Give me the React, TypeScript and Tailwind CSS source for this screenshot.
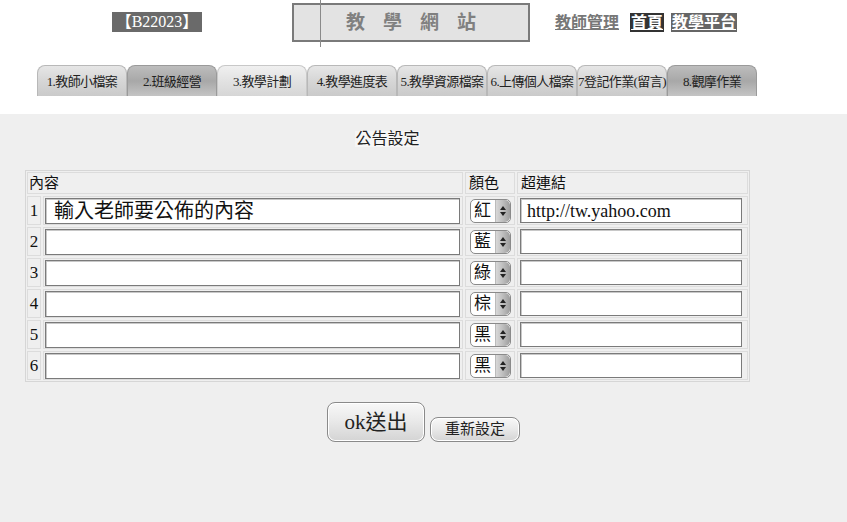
import React from "react";

const tabs = [
  { t: "1.教師小檔案", dark: false, light: false },
  { t: "2.班級經營", dark: true, light: false },
  { t: "3.教學計劃", dark: false, light: true },
  { t: "4.教學進度表", dark: false, light: false },
  { t: "5.教學資源檔案", dark: false, light: false },
  { t: "6.上傳個人檔案", dark: false, light: false },
  { t: "7登記作業(留言)", dark: false, light: false },
  { t: "8.觀摩作業", dark: true, light: false },
];

const rows = [
  { n: "1", text: "輸入老師要公佈的內容", color: "紅", link: "http://tw.yahoo.com" },
  { n: "2", text: "", color: "藍", link: "" },
  { n: "3", text: "", color: "綠", link: "" },
  { n: "4", text: "", color: "棕", link: "" },
  { n: "5", text: "", color: "黑", link: "" },
  { n: "6", text: "", color: "黑", link: "" },
];

function Stepper() {
  return (
    <div className="flex h-full w-[15px] flex-col items-center justify-center gap-[2px] rounded-r-[5px] border-l border-[#bbb] bg-gradient-to-r from-[#d8d8d8] via-[#bdbdbd] to-[#9d9d9d]">
      <svg width="6" height="4" viewBox="0 0 6 4"><path d="M3 0 L6 4 L0 4 Z" fill="#222" /></svg>
      <svg width="6" height="4" viewBox="0 0 6 4"><path d="M0 0 L6 0 L3 4 Z" fill="#222" /></svg>
    </div>
  );
}

export default function App() {
  return (
    <div className="min-h-screen bg-[#efefef] font-['Liberation_Serif','Noto_Sans_CJK_TC',serif] text-[#111]">
      <header className="relative h-[114px] bg-white">
        <div className="absolute left-[320px] top-0 h-[47px] w-px bg-[#8a8a8a]" />
        <div className="flex h-[42px] items-start">
          <div className="ml-[112px] mt-[12px] flex h-[20px] w-[90px] items-center justify-center bg-[#6a6a6a] text-[16px] leading-none text-white">
            【B22023】
          </div>
          <div className="ml-[90px] mt-[3px] flex h-[39px] w-[238px] items-center justify-center border-2 border-[#7a7a7a] bg-[#e3e3e3] pl-[18px] text-[19px] font-bold leading-none tracking-[18px] text-[#808080]">
            教學網站
          </div>
          <div className="ml-[25px] mt-[13px] flex items-center text-[16px] font-bold leading-[19px]">
            <span className="text-[#777] underline">教師管理</span>
            <span className="ml-[11px] bg-[#333] px-[1px] text-white underline">首頁</span>
            <span className="ml-[7px] bg-[#666] px-[1px] text-white underline">教學平台</span>
          </div>
        </div>
        <div className="ml-[37px] mt-[23px] flex">
          {tabs.map((tab) => (
            <div
              key={tab.t}
              className={
                "flex h-[31px] w-[90px] items-center justify-center whitespace-nowrap rounded-t-[8px] border border-b-0 text-[13px] leading-none tracking-[-0.6px] text-[#222] " +
                (tab.dark
                  ? "border-[#9a9a9a] bg-gradient-to-b from-[#bdbdbd] via-[#a8a8a8] to-[#c4c4c4]"
                  : tab.light
                  ? "border-[#c8c8c8] bg-gradient-to-b from-[#f0f0f0] via-[#e2e2e2] to-[#d6d6d6]"
                  : "border-[#b8b8b8] bg-gradient-to-b from-[#e6e6e6] via-[#d6d6d6] to-[#cacaca]")
              }
            >
              {tab.t}
            </div>
          ))}
        </div>
      </header>

      <main className="pb-[40px] pt-[15px]">
        <div className="ml-[25px] w-[725px]">
          <div className="flex h-[20px] items-center justify-center">
            <span className="bg-[#f6f6f6] text-[16px] leading-none text-[#222]">公告設定</span>
          </div>
          <div className="mt-[21px] grid grid-cols-[14px_420px_50px_231px] gap-[2px] border border-[#d6d6d6] bg-[#efefef] p-[1px]">
            <div className="col-span-2 flex h-[22px] items-center border border-[#dcdcdc] pl-[1px] text-[15px] leading-none">內容</div>
            <div className="flex h-[22px] items-center border border-[#dcdcdc] pl-[3px] text-[15px] leading-none">顏色</div>
            <div className="flex h-[22px] items-center border border-[#dcdcdc] pl-[3px] text-[15px] leading-none">超連結</div>
            {rows.map((r) => (
              <React.Fragment key={r.n}>
                <div className="flex h-[29px] items-center justify-center border border-[#dcdcdc] text-[17px] leading-none">{r.n}</div>
                <div className="flex h-[29px] items-start border border-[#dcdcdc] pl-[1px] pt-[1px]">
                  <div className="flex h-[26px] w-[415px] items-center border border-[#7a7a7a] bg-white pl-[8px] text-[20px] leading-none shadow-[inset_1px_1px_0_#c8c8c8]">
                    {r.text}
                  </div>
                </div>
                <div className="flex h-[29px] items-center border border-[#dcdcdc] pl-[4px]">
                  <div className="flex h-[24px] w-[41px] items-center overflow-hidden rounded-[5px] border border-[#8a8a8a] bg-white">
                    <span className="flex-1 pl-[3px] text-[17px] leading-none">{r.color}</span>
                    <Stepper />
                  </div>
                </div>
                <div className="flex h-[29px] items-start border border-[#dcdcdc] pl-[2px] pt-[1px]">
                  <div className="flex h-[25px] w-[222px] items-center border border-[#7a7a7a] bg-white pl-[6px] text-[18px] leading-none shadow-[inset_1px_1px_0_#c8c8c8]">
                    {r.link}
                  </div>
                </div>
              </React.Fragment>
            ))}
          </div>
        </div>
        <div className="mt-[20px] flex items-end justify-center gap-[5px]">
          <div className="flex h-[40px] w-[98px] items-center justify-center rounded-[8px] border border-[#8a8a8a] bg-gradient-to-b from-[#f8f8f8] via-[#e8e8e8] to-[#d4d4d4] text-[21px] leading-none text-[#222] shadow-[inset_0_0_0_1px_#fff]">
            ok送出
          </div>
          <div className="flex h-[25px] w-[90px] items-center justify-center rounded-[8px] border border-[#8a8a8a] bg-gradient-to-b from-[#f8f8f8] via-[#e8e8e8] to-[#d4d4d4] text-[15px] leading-none text-[#222] shadow-[inset_0_0_0_1px_#fff]">
            重新設定
          </div>
        </div>
      </main>
    </div>
  );
}
